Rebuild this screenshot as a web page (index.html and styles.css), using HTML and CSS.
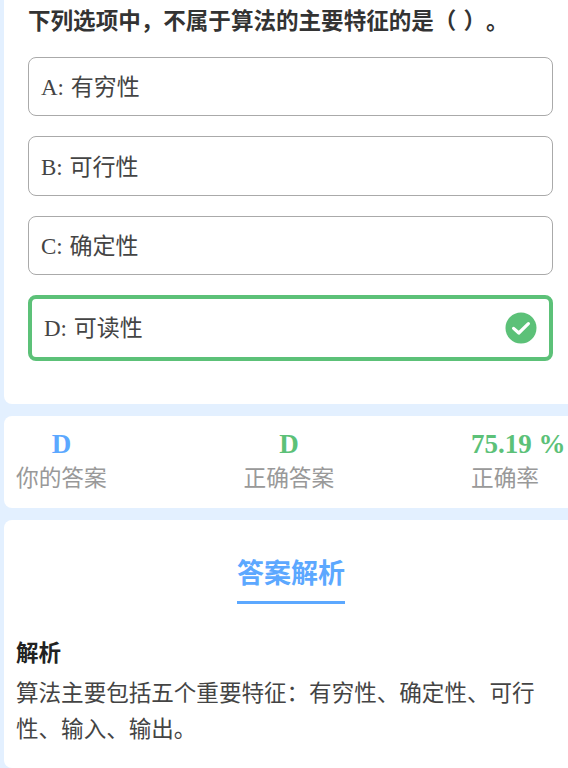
FILE: index.html
```html
<!DOCTYPE html>
<html lang="zh-CN">
<head>
  <meta charset="UTF-8" />
  <meta name="viewport" content="width=device-width, initial-scale=1.0" />
  <title>答案解析</title>
  <link rel="stylesheet" href="styles.css">
</head>
<body>

  <!-- 题目 -->
  <section class="card question">
    <h1 class="question-title">下列选项中，不属于算法的主要特征的是（ ）。</h1>
    <div class="option"><span>A: 有穷性</span></div>
    <div class="option"><span>B: 可行性</span></div>
    <div class="option"><span>C: 确定性</span></div>
    <div class="option option-correct">
      <span>D: 可读性</span>
      <svg class="check" viewBox="0 0 32 32" width="32" height="32" aria-hidden="true">
        <circle cx="16" cy="16" r="15.5" fill="#5cc178" />
        <path d="M8.6 16.4l5.2 4.6 9.6-9.4" fill="none" stroke="#fff" stroke-width="3.2" stroke-linecap="round" stroke-linejoin="round" />
      </svg>
    </div>
  </section>

  <!-- 统计 -->
  <section class="card stats">
    <div class="stat">
      <div class="stat-value blue">D</div>
      <div class="stat-label">你的答案</div>
    </div>
    <div class="stat">
      <div class="stat-value green">D</div>
      <div class="stat-label">正确答案</div>
    </div>
    <div class="stat stat-rate">
      <div class="stat-value green">75.19 %</div>
      <div class="stat-label">正确率</div>
    </div>
  </section>

  <!-- 解析 -->
  <section class="card analysis">
    <div class="analysis-head">
      <h2 class="analysis-title">答案解析</h2>
    </div>
    <h3 class="analysis-label">解析</h3>
    <p class="analysis-text">算法主要包括五个重要特征：有穷性、确定性、可行性、输入、输出。</p>
  </section>

</body>
</html>
```

FILE: styles.css
```css
:root {
  --page-bg: #e3f0ff;
  --blue: #5ca8ff;
  --green: #5cc178;
  --text-color: #333;
  --muted: #999;
}

html, body {
  height: 768px;
  overflow: hidden;
}

body {
  margin: 0;
  background: var(--page-bg);
  color: var(--text-color);
  font-family: "Liberation Serif", "Noto Sans CJK SC", serif;
  text-spacing-trim: space-all;
}

.card {
  box-sizing: border-box;
  width: 574px;
  margin: 0 0 12px 4px;
  background: #fff;
  border-radius: 8px;
}

.question {
  height: 404px;
  padding: 5px 25px 0 24px;
  border-radius: 0 0 8px 8px;
}

.question-title {
  margin: 0 0 23px;
  font-family: "Noto Sans CJK SC", sans-serif;
  font-size: 22.55px;
  line-height: 29px;
  font-weight: 700;
  word-spacing: 2px;
  white-space: nowrap;
}

.option {
  box-sizing: border-box;
  height: 59.4px;
  margin-bottom: 20px;
  padding: 0 12px 3px;
  display: flex;
  align-items: center;
  border: 1px solid #aaa;
  border-radius: 8px;
  color: #444;
  font-size: 23px;
  word-spacing: 1px;
}

.option-correct {
  height: 66px;
  justify-content: space-between;
  padding: 0 12px;
  border: 4px solid var(--green);
}

.option-correct span {
  margin-bottom: 5px;
}

.check {
  display: block;
}

.stats {
  height: 92px;
  padding: 13px 39px 0 12px;
  display: flex;
  justify-content: space-between;
}

.stat {
  text-align: center;
}

.stat-rate {
  width: 68px;
  text-align: left;
  white-space: nowrap;
}

.stat-value {
  font-size: 27px;
  line-height: 30px;
  font-weight: 700;
}

.stat-label {
  margin-top: 3px;
  color: var(--muted);
  font-size: 22.7px;
  line-height: 33px;
}

.blue { color: var(--blue); }
.green { color: var(--green); }

.analysis {
  height: 248px;
  padding: 30px 12px 0;
}

.analysis-head {
  display: flex;
  justify-content: center;
}

.analysis-title {
  margin: 0;
  padding-bottom: 7px;
  border-bottom: 3px solid var(--blue);
  color: var(--blue);
  font-family: "Noto Sans CJK SC", sans-serif;
  font-size: 27px;
  line-height: 44px;
  font-weight: 700;
}

.analysis-label {
  margin: 29px 0 0;
  font-family: "Noto Sans CJK SC", sans-serif;
  font-size: 22.5px;
  line-height: 36px;
  font-weight: 700;
  color: #222;
}

.analysis-text {
  margin: 5px 0 0;
  width: 530px;
  font-family: "Noto Sans CJK SC", sans-serif;
  font-size: 22.55px;
  line-height: 35.5px;
  color: #444;
}
```
